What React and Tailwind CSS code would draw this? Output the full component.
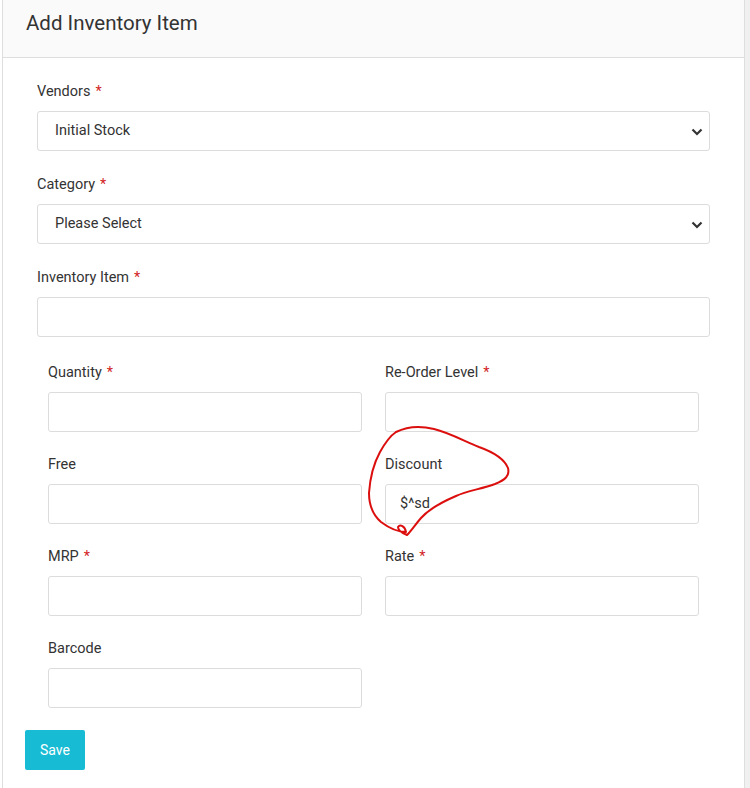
import React from 'react';

const font = { fontFamily: 'Roboto, "Liberation Sans", sans-serif' };

const Label = ({ text, required }) => (
  <label className="block text-[14.5px] leading-[20px] text-[#333] mb-[9px]">
    {text}
    {required && <span className="text-[#d21f1f] ml-[5px]">*</span>}
  </label>
);

const Chevron = () => (
  <svg width="12" height="8" viewBox="0 0 12 8" className="absolute right-[6px] top-[16px]">
    <path d="M1.5 1.5 L6 6 L10.5 1.5" fill="none" stroke="#333" strokeWidth="2.2" />
  </svg>
);

const SelectBox = ({ value }) => (
  <div className="relative h-[40px] border border-[#dcdcdc] rounded-[3px] bg-white flex items-center pl-[17px] text-[14.5px] text-[#333]">
    {value}
    <Chevron />
  </div>
);

const Input = ({ value }) => (
  <div className="h-[40px] border border-[#dcdcdc] rounded-[3px] bg-white flex items-center pl-[14px] text-[14.5px] text-[#333]">
    {value}
  </div>
);

const Field = ({ label, required, children }) => (
  <div>
    <Label text={label} required={required} />
    {children}
  </div>
);

export default function App() {
  return (
    <div className="w-[750px] h-[788px] bg-white flex overflow-hidden" style={font}>
      <div className="relative ml-[2px] w-[743px] border-l border-r border-[#dedede] bg-white">
        <div className="h-[58px] bg-[#fafafa] border-b border-[#dedede] pl-[23px] pt-[9px]">
          <h1 className="text-[20.5px] leading-[28px] text-[#333]">Add Inventory Item</h1>
        </div>

        <div className="pt-[24px] pl-[34px] pr-[34px] flex flex-col gap-[24px]">
          <Field label="Vendors" required>
            <SelectBox value="Initial Stock" />
          </Field>
          <Field label="Category" required>
            <SelectBox value="Please Select" />
          </Field>
          <Field label="Inventory Item" required>
            <Input />
          </Field>
          <div className="grid grid-cols-2 gap-x-[23px] gap-y-[23px] px-[11px] mt-[2px]">
            <Field label="Quantity" required><Input /></Field>
            <Field label="Re-Order Level" required><Input /></Field>
            <Field label="Free"><Input /></Field>
            <Field label="Discount"><Input value="$^sd" /></Field>
            <Field label="MRP" required><Input /></Field>
            <Field label="Rate" required><Input /></Field>
            <Field label="Barcode"><Input /></Field>
          </div>
        </div>

        <div className="pl-[22px] pt-[22px]">
          <button className="w-[60px] h-[40px] bg-[#17bcd4] text-white text-[14px] rounded-[2px]">Save</button>
        </div>

        <svg className="absolute left-0 top-0 pointer-events-none" width="743" height="788" viewBox="2 0 743 788">
          <path
            d="M395 432 C407 426 421 426 433 429 C449 433 463 441 478 447 C492 452 503 458 507 468 C509 476 504 480 494 484 C480 489 466 491 455 496 C441 502 428 509 420 518 C414 525 410 531 406 535 C401 533 397 530 397 527 C399 524 404 526 405 532 C398 532 388 528 380 522 C372 515 368 505 368 493 C369 478 373 463 379 452 C384 443 389 436 395 432"
            fill="none"
            stroke="#dc0f0f"
            strokeWidth="2"
            strokeLinejoin="round"
            strokeLinecap="round"
          />
        </svg>
      </div>
      <div className="flex-1 bg-[#f0f0f0]" />
    </div>
  );
}
